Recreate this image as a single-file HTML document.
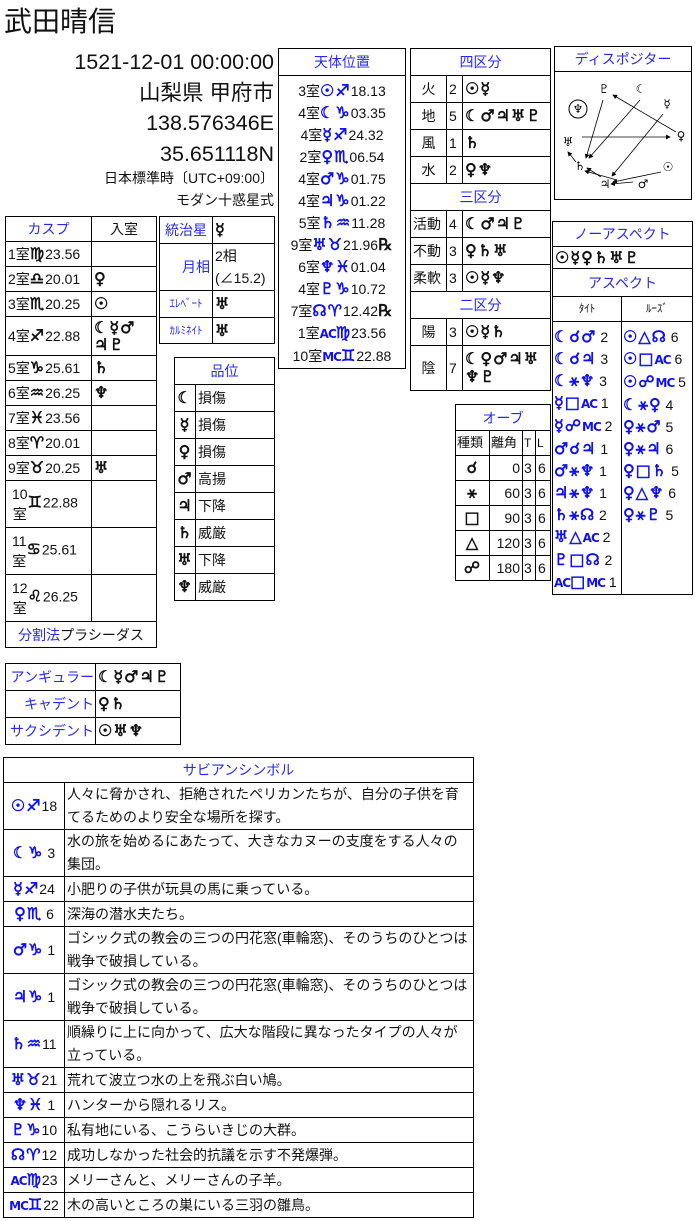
<!DOCTYPE html>
<html><head><meta charset="utf-8"><style>
*{margin:0;padding:0;box-sizing:border-box}
body{width:695px;height:1221px;background:#fff;position:relative;font-family:"Liberation Sans","Noto Sans CJK JP",sans-serif;font-size:14px;color:#111;overflow:hidden}
.a{position:absolute}
table{border-collapse:collapse;table-layout:fixed;position:absolute}
td{border:1px solid #000;padding:0 2px;white-space:nowrap;overflow:hidden;vertical-align:middle;line-height:18px}
.h{color:#2828f0;text-align:center}
.s{font-family:"DejaVu Sans",sans-serif;font-weight:normal;font-size:16px;-webkit-text-stroke:0.6px currentColor;letter-spacing:1px}
.b{color:#1010f0}
.c{text-align:center}.r{text-align:right}
.w{white-space:normal}
.k{font-size:12px;font-weight:bold;-webkit-text-stroke:0;letter-spacing:-1px}
</style></head><body>
<div class="a" style="left:4px;top:3px;font-size:28px;line-height:38px">武田晴信</div>
<div class="a r" style="left:0;width:274px;top:47px;font-size:21.5px;line-height:30.5px">1521-12-01 00:00:00<br>山梨県 甲府市<br>138.576346E<br>35.651118N</div>
<div class="a r" style="left:0;width:274px;top:167px;font-size:14px;line-height:22px">日本標準時〔UTC+09:00〕<br>モダン十惑星式</div>

<table style="left:5px;top:216px;width:151px">
<colgroup><col style="width:86px"><col style="width:65px"></colgroup>
<tr style="height:25px"><td class="h">カスプ</td><td class="c">入室</td></tr>
<tr style="height:25px"><td>1室<span class="s">♍</span>23.56</td><td></td></tr>
<tr style="height:25px"><td>2室<span class="s">♎</span>20.01</td><td class="s">♀</td></tr>
<tr style="height:25px"><td>3室<span class="s">♏</span>20.25</td><td class="s">☉</td></tr>
<tr style="height:39px"><td>4室<span class="s">♐</span>22.88</td><td class="s w" style="line-height:17px">☾☿♂<br>♃♇</td></tr>
<tr style="height:25px"><td>5室<span class="s">♑</span>25.61</td><td class="s">♄</td></tr>
<tr style="height:25px"><td>6室<span class="s">♒</span>26.25</td><td class="s">♆</td></tr>
<tr style="height:25px"><td>7室<span class="s">♓</span>23.56</td><td></td></tr>
<tr style="height:25px"><td>8室<span class="s">♈</span>20.01</td><td></td></tr>
<tr style="height:25px"><td>9室<span class="s">♉</span>20.25</td><td class="s">♅</td></tr>
<tr style="height:47px"><td><div style="display:inline-block;text-align:center;line-height:20px;vertical-align:middle;padding-left:4px">10<br>室</div><span class="s">♊</span>22.88</td><td></td></tr>
<tr style="height:47px"><td><div style="display:inline-block;text-align:center;line-height:20px;vertical-align:middle;padding-left:4px">11<br>室</div><span class="s">♋</span>25.61</td><td></td></tr>
<tr style="height:47px"><td><div style="display:inline-block;text-align:center;line-height:20px;vertical-align:middle;padding-left:4px">12<br>室</div><span class="s">♌</span>26.25</td><td></td></tr>
<tr style="height:26px"><td colspan="2" class="c"><span class="h">分割法</span>プラシーダス</td></tr>
</table>

<table style="left:159px;top:216px;width:115px">
<colgroup><col style="width:53px"><col style="width:62px"></colgroup>
<tr style="height:27px"><td class="h">統治星</td><td class="s">☿</td></tr>
<tr style="height:47px"><td class="h r">月相</td><td class="w" style="line-height:22px">2相<br>(∠15.2)</td></tr>
<tr style="height:27px"><td class="h" style="font-size:11px">ｴﾚﾍﾞｰﾄ</td><td class="s">♅</td></tr>
<tr style="height:26px"><td class="h" style="font-size:11px">ｶﾙﾐﾈｲﾄ</td><td class="s">♅</td></tr>
</table>

<table style="left:174px;top:357px;width:100px">
<colgroup><col style="width:21px"><col style="width:79px"></colgroup>
<tr style="height:27px"><td colspan="2" class="h">品位</td></tr>
<tr style="height:27px"><td class="s c" style="padding:0">☾</td><td>損傷</td></tr>
<tr style="height:27px"><td class="s c" style="padding:0">☿</td><td>損傷</td></tr>
<tr style="height:27px"><td class="s c" style="padding:0">♀</td><td>損傷</td></tr>
<tr style="height:27px"><td class="s c" style="padding:0">♂</td><td>高揚</td></tr>
<tr style="height:27px"><td class="s c" style="padding:0">♃</td><td>下降</td></tr>
<tr style="height:27px"><td class="s c" style="padding:0">♄</td><td>威厳</td></tr>
<tr style="height:27px"><td class="s c" style="padding:0">♅</td><td>下降</td></tr>
<tr style="height:27px"><td class="s c" style="padding:0">♆</td><td>威厳</td></tr>
</table>

<table style="left:278px;top:48px;width:128px">
<tr style="height:27px"><td class="h">天体位置</td></tr>
<tr style="height:291px"><td class="c w" style="line-height:22px;vertical-align:top;padding:4px 0 0 0">
3室<span class="s b">☉♐</span>18.13<br>4室<span class="s b">☾♑</span>03.35<br>4室<span class="s b">☿♐</span>24.32<br>2室<span class="s b">♀♏</span>06.54<br>4室<span class="s b">♂♑</span>01.75<br>4室<span class="s b">♃♑</span>01.22<br>5室<span class="s b">♄♒</span>11.28<br>9室<span class="s b">♅♉</span>21.96<span class="s">℞</span><br>6室<span class="s b">♆♓</span>01.04<br>4室<span class="s b">♇♑</span>10.72<br>7室<span class="s b">☊♈</span>12.42<span class="s">℞</span><br>1室<span class="s b"><span class="k">AC</span>♍</span>23.56<br>10室<span class="s b"><span class="k">MC</span>♊</span>22.88</td></tr>
</table>

<table style="left:410px;top:48px;width:140px">
<colgroup><col style="width:36px"><col style="width:16px"><col style="width:88px"></colgroup>
<tr style="height:27px"><td colspan="3" class="h">四区分</td></tr>
<tr style="height:27px"><td class="c">火</td><td>2</td><td class="s">☉☿</td></tr>
<tr style="height:27px"><td class="c">地</td><td>5</td><td class="s">☾♂♃♅♇</td></tr>
<tr style="height:27px"><td class="c">風</td><td>1</td><td class="s">♄</td></tr>
<tr style="height:27px"><td class="c">水</td><td>2</td><td class="s">♀♆</td></tr>
<tr style="height:27px"><td colspan="3" class="h">三区分</td></tr>
<tr style="height:27px"><td>活動</td><td>4</td><td class="s">☾♂♃♇</td></tr>
<tr style="height:27px"><td>不動</td><td>3</td><td class="s">♀♄♅</td></tr>
<tr style="height:27px"><td>柔軟</td><td>3</td><td class="s">☉☿♆</td></tr>
<tr style="height:27px"><td colspan="3" class="h">二区分</td></tr>
<tr style="height:27px"><td class="c">陽</td><td>3</td><td class="s">☉☿♄</td></tr>
<tr style="height:45px"><td class="c">陰</td><td>7</td><td class="s w" style="line-height:18px">☾♀♂♃♅<br>♆♇</td></tr>
</table>

<table style="left:554px;top:46px;width:138px">
<tr style="height:25px"><td class="h">ディスポジター</td></tr>
<tr style="height:128px"><td style="padding:0"><svg width="136" height="127" viewBox="0 0 136 127" style="display:block">
<defs><marker id="m" markerWidth="6" markerHeight="6" refX="5" refY="3" orient="auto"><path d="M0,0L6,3L0,6z" fill="#000"/></marker></defs>
<g font-family="DejaVu Sans" font-size="12" text-anchor="middle" fill="#000">
<circle cx="23" cy="37" r="9" fill="none" stroke="#000"/><text x="23" y="41">♆</text>
<text x="49" y="21">♇</text><text x="86" y="21">☾</text><text x="112" y="36">☿</text>
<text x="126" y="68">♀</text><text x="13" y="74">♅</text><text x="25" y="98">♄</text>
<text x="50" y="116">♃</text><text x="88" y="116">♂</text><text x="113" y="99">☉</text></g>
<g stroke="#000" stroke-width="0.8" marker-end="url(#m)">
<line x1="48" y1="28" x2="31" y2="86"/><line x1="85" y1="28" x2="34" y2="86"/>
<line x1="121" y1="60" x2="58" y2="23"/><line x1="27" y1="65" x2="115" y2="65"/>
<line x1="108" y1="42" x2="57" y2="104"/><line x1="106" y1="100" x2="58" y2="110"/>
<line x1="78" y1="110" x2="56" y2="112"/><line x1="46" y1="105" x2="32" y2="96"/>
<line x1="21" y1="90" x2="13" y2="80"/><line x1="62" y1="108" x2="30" y2="99"/></g>
</svg></td></tr>
</table>

<table style="left:552px;top:221px;width:140px">
<colgroup><col style="width:69px"><col style="width:71px"></colgroup>
<tr style="height:25px"><td colspan="2" class="h">ノーアスペクト</td></tr>
<tr style="height:22px"><td colspan="2" class="s">☉☿♀♄♅♇</td></tr>
<tr style="height:28px"><td colspan="2" class="h">アスペクト</td></tr>
<tr style="height:25px"><td class="c" style="font-size:11px">ﾀｲﾄ</td><td class="c" style="font-size:11px">ﾙｰｽﾞ</td></tr>
<tr style="height:273px"><td style="vertical-align:top;padding-top:4px;line-height:22px;padding-left:1px"><span class="s b">☾☌♂</span> 2<br><span class="s b">☾☌♃</span> 3<br><span class="s b">☾⚹♆</span> 3<br><span class="s b">☿□<span class="k">AC</span></span> 1<br><span class="s b">☿☍<span class="k">MC</span></span> 2<br><span class="s b">♂☌♃</span> 1<br><span class="s b">♂⚹♆</span> 1<br><span class="s b">♃⚹♆</span> 1<br><span class="s b">♄⚹☊</span> 2<br><span class="s b">♅△<span class="k">AC</span></span> 2<br><span class="s b">♇□☊</span> 2<br><span class="s b"><span class="k">AC</span>□<span class="k">MC</span></span> 1</td>
<td style="vertical-align:top;padding-top:4px;line-height:22px;padding-left:1px"><span class="s b">☉△☊</span> 6<br><span class="s b">☉□<span class="k">AC</span></span> 6<br><span class="s b">☉☍<span class="k">MC</span></span> 5<br><span class="s b">☾⚹♀</span> 4<br><span class="s b">♀⚹♂</span> 5<br><span class="s b">♀⚹♃</span> 6<br><span class="s b">♀□♄</span> 5<br><span class="s b">♀△♆</span> 6<br><span class="s b">♀⚹♇</span> 5</td></tr>
</table>

<table style="left:455px;top:404px;width:95px">
<colgroup><col style="width:34px"><col style="width:33px"><col style="width:13px"><col style="width:15px"></colgroup>
<tr style="height:26px"><td colspan="4" class="h">オーブ</td></tr>
<tr style="height:25px"><td style="padding:0 1px;font-size:13px">種類</td><td style="padding:0 1px;font-size:13px">離角</td><td style="padding:0 1px;font-size:12px">T</td><td style="padding:0 1px;font-size:12px">L</td></tr>
<tr style="height:25px"><td class="s c">☌</td><td class="r">0</td><td style="padding:0 1px">3</td><td style="padding:0 2px">6</td></tr>
<tr style="height:25px"><td class="s c">⚹</td><td class="r">60</td><td style="padding:0 1px">3</td><td style="padding:0 2px">6</td></tr>
<tr style="height:25px"><td class="s c">□</td><td class="r">90</td><td style="padding:0 1px">3</td><td style="padding:0 2px">6</td></tr>
<tr style="height:25px"><td class="s c">△</td><td class="r">120</td><td style="padding:0 1px">3</td><td style="padding:0 2px">6</td></tr>
<tr style="height:25px"><td class="s c">☍</td><td class="r">180</td><td style="padding:0 1px">3</td><td style="padding:0 2px">6</td></tr>
</table>

<table style="left:5px;top:663px;width:175px">
<colgroup><col style="width:90px"><col style="width:85px"></colgroup>
<tr style="height:27px"><td class="h r" style="padding:0 1px">アンギュラー</td><td class="s">☾☿♂♃♇</td></tr>
<tr style="height:27px"><td class="h r" style="padding:0 1px">キャデント</td><td class="s">♀♄</td></tr>
<tr style="height:27px"><td class="h r" style="padding:0 1px">サクシデント</td><td class="s">☉♅♆</td></tr>
</table>

<table style="left:3px;top:757px;width:470px">
<colgroup><col style="width:61px"><col style="width:409px"></colgroup>
<tr style="height:25px"><td colspan="2" class="h">サビアンシンボル</td></tr>
<tr style="height:47px"><td class="c" style="padding:0"><span class="s b">☉♐</span>18</td><td class="w" style="line-height:23px">人々に脅かされ、拒絶されたペリカンたちが、自分の子供を育てるためのより安全な場所を探す。</td></tr>
<tr style="height:47px"><td class="c" style="padding:0"><span class="s b">☾♑</span> 3</td><td class="w" style="line-height:23px">水の旅を始めるにあたって、大きなカヌーの支度をする人々の集団。</td></tr>
<tr style="height:25px"><td class="c" style="padding:0"><span class="s b">☿♐</span>24</td><td>小肥りの子供が玩具の馬に乗っている。</td></tr>
<tr style="height:25px"><td class="c" style="padding:0"><span class="s b">♀♏</span> 6</td><td>深海の潜水夫たち。</td></tr>
<tr style="height:47px"><td class="c" style="padding:0"><span class="s b">♂♑</span> 1</td><td class="w" style="line-height:23px">ゴシック式の教会の三つの円花窓(車輪窓)、そのうちのひとつは戦争で破損している。</td></tr>
<tr style="height:47px"><td class="c" style="padding:0"><span class="s b">♃♑</span> 1</td><td class="w" style="line-height:23px">ゴシック式の教会の三つの円花窓(車輪窓)、そのうちのひとつは戦争で破損している。</td></tr>
<tr style="height:47px"><td class="c" style="padding:0"><span class="s b">♄♒</span>11</td><td class="w" style="line-height:23px">順繰りに上に向かって、広大な階段に異なったタイプの人々が立っている。</td></tr>
<tr style="height:25px"><td class="c" style="padding:0"><span class="s b">♅♉</span>21</td><td>荒れて波立つ水の上を飛ぶ白い鳩。</td></tr>
<tr style="height:25px"><td class="c" style="padding:0"><span class="s b">♆♓</span> 1</td><td>ハンターから隠れるリス。</td></tr>
<tr style="height:25px"><td class="c" style="padding:0"><span class="s b">♇♑</span>10</td><td>私有地にいる、こうらいきじの大群。</td></tr>
<tr style="height:25px"><td class="c" style="padding:0"><span class="s b">☊♈</span>12</td><td>成功しなかった社会的抗議を示す不発爆弾。</td></tr>
<tr style="height:25px"><td class="c" style="padding:0"><span class="s b"><span class="k">AC</span>♍</span>23</td><td>メリーさんと、メリーさんの子羊。</td></tr>
<tr style="height:25px"><td class="c" style="padding:0"><span class="s b"><span class="k">MC</span>♊</span>22</td><td>木の高いところの巣にいる三羽の雛鳥。</td></tr>
</table>
</body></html>
